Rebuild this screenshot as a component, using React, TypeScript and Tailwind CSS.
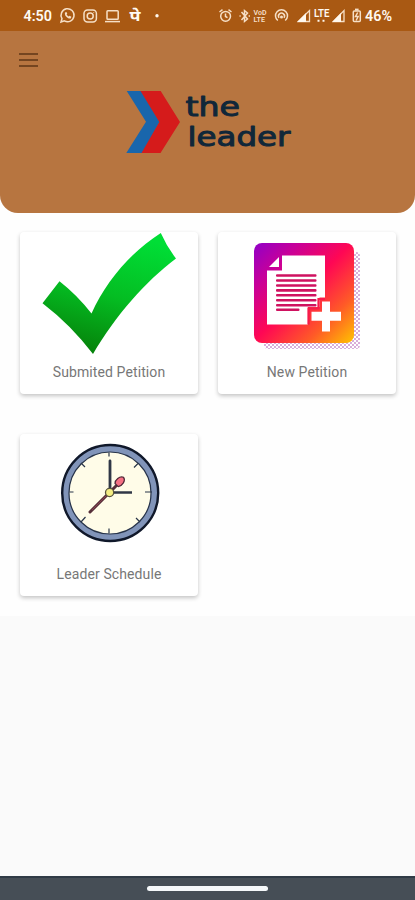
import React from "react";

function StatusBar() {
  return (
    <div className="h-[31px] shrink-0 bg-[#a95913] text-[#fff8ee]">
      <svg width="415" height="31" viewBox="0 0 415 31" fill="none" stroke="#f6dfc6" strokeWidth="1.5" className="block">
        <g fill="#fffaf2" stroke="none" fontFamily="Roboto, sans-serif" fontWeight="600">
          <text x="23.5" y="21" fontSize="14" textLength="28.5" lengthAdjust="spacingAndGlyphs">4:50</text>
          <text x="129.5" y="21" fontSize="15" fontWeight="700" fontFamily="'Noto Sans Devanagari', 'Noto Sans', FreeSans, sans-serif" textLength="11" lengthAdjust="spacingAndGlyphs">पे</text>
          <text x="253.5" y="14.5" fontSize="7" textLength="13" lengthAdjust="spacingAndGlyphs" fill="#f6dfc6">VoD</text>
          <text x="253.5" y="21.8" fontSize="7.5" textLength="11.5" lengthAdjust="spacingAndGlyphs" fill="#f6dfc6">LTE</text>
          <text x="314" y="16.5" fontSize="10" textLength="15.5" lengthAdjust="spacingAndGlyphs">LTE</text>
          <text x="365" y="21" fontSize="14" textLength="27" lengthAdjust="spacingAndGlyphs">46%</text>
        </g>
        <path d="M61 22l1-3.4a6.5 6.5 0 1 1 2.4 2.3z" />
        <path d="M65 12.5c-.8 3 2.4 6.5 5.7 6l.7-1.7-1.8-1-1 .8c-1-.5-1.6-1.2-2-2l.7-1-.9-1.7z" fill="#f6dfc6" stroke="none" />
        <rect x="84" y="10" width="12.4" height="12" rx="3.5" />
        <circle cx="90.2" cy="16" r="3" />
        <circle cx="93.8" cy="12.6" r=".5" fill="#f6dfc6" stroke="none" />
        <rect x="107" y="10.7" width="11.2" height="8.5" rx=".8" />
        <path d="M105 21.6h15" />
        <circle cx="157" cy="15.8" r="1.7" fill="#fff8ee" stroke="none" />
        <circle cx="225.6" cy="16.3" r="4.9" />
        <path d="M225.5 13.5v3l2 1.2M219.5 12l3-2.3M231.5 12l-3-2.3" />
        <path d="M241.5 12l6 7-3 2.5v-11l3 2.5-6 7" />
        <path d="M239.5 16h1.2M248.6 16h1.4" />
        <path d="M277.8 20.5a6 6 0 1 1 7.4 0M279 17.8a3 3 0 1 1 5 0" />
        <circle cx="281.5" cy="17" r="1.5" fill="#f6dfc6" stroke="none" />
        <path d="M298.5 21.5l11-11v11z" strokeWidth="1.3" />
        <path d="M297 22l9-9V22z" fill="#fff8ee" stroke="none" />
        <path d="M317.5 20.7h2M322.5 20.7h2" stroke="#fff8ee" strokeWidth="2" />
        <path d="M333.5 21.5l10.5-11v11z" strokeWidth="1.3" />
        <path d="M332 22l9-9V22z" fill="#fff8ee" stroke="none" />
        <rect x="353.3" y="11" width="7" height="10.6" rx="1" />
        <path d="M355 9.6h3.6" strokeWidth="2" />
        <path d="M357.7 12.5l-2.2 4h2.6l-2 4" strokeWidth="1.5" />
      </svg>
    </div>
  );
}

function Header() {
  return (
    <header className="h-[181.5px] shrink-0 rounded-b-[18px] bg-[#b77540] pt-[22px]">
      <button aria-label="Menu" className="ml-[19px] flex w-[19px] flex-col gap-[4px]">
        <span className="h-[2px] w-full bg-[#744520]" />
        <span className="h-[2px] w-full bg-[#744520]" />
        <span className="h-[2px] w-full bg-[#744520]" />
      </button>
      <div className="ml-[126px] mt-[23px]">
        <svg width="168" height="66" viewBox="126 90 168 66" className="block">
          <path d="M126.7 91h15l18 30.7-17 31.3h-16.4L146 121.7z" fill="#1966ac" />
          <path d="M140.5 91h20.2l19.3 31-19.5 31h-19l17.8-31z" fill="#d51b1b" />
          <g fill="#102739" stroke="#102739" strokeWidth="1" strokeLinejoin="round" fontFamily="'DejaVu Sans', sans-serif">
            <text x="185.5" y="115.5" fontSize="26.5" textLength="54.5" lengthAdjust="spacingAndGlyphs">the</text>
            <text x="187.5" y="145.5" fontSize="27" textLength="103" lengthAdjust="spacingAndGlyphs">leader</text>
          </g>
        </svg>
      </div>
    </header>
  );
}

function CheckArt() {
  return (
    <svg width="178" height="128" viewBox="20 232 178 128" className="block">
      <defs>
        <linearGradient id="green" x1=".6" y1="0" x2=".3" y2="1">
          <stop offset="0" stopColor="#00de36" />
          <stop offset=".5" stopColor="#04bd22" />
          <stop offset="1" stopColor="#067f09" />
        </linearGradient>
      </defs>
      <path d="M42.5 303.2L59.5 281.3Q77 295 91.5 313.5C106 281 131 252 160.8 233Q167 247 176 258.5C145 282 116 315 93 354Q71 325 42.5 303.2z" fill="url(#green)" />
    </svg>
  );
}

function DocumentArt() {
  return (
    <svg width="178" height="128" viewBox="218 232 178 128" className="block">
      <defs>
        <linearGradient id="sunset" x1="0" y1="0" x2="1" y2="1">
          <stop offset="0" stopColor="#9000c8" />
          <stop offset=".22" stopColor="#c7009a" />
          <stop offset=".49" stopColor="#ff0754" />
          <stop offset=".76" stopColor="#ff5a27" />
          <stop offset="1" stopColor="#ffc400" />
        </linearGradient>
        <pattern id="dots" width="4" height="4" patternUnits="userSpaceOnUse">
          <circle cx="1" cy="1" r=".95" fill="#c88bcb" />
          <circle cx="3" cy="3" r=".95" fill="#c88bcb" />
        </pattern>
      </defs>
      <rect x="264" y="252" width="96" height="97" rx="4" fill="url(#dots)" />
      <rect x="254" y="243" width="100" height="100" rx="8" fill="url(#sunset)" />
      <path d="M282 255.5h43v42h-5.5v9.5h-11.5v17.5H267v-54h15z" fill="#fff" />
      <path d="M269 267l10-10v10z" fill="#fff" />
      <g fill="#cf1260">
        <rect x="276" y="274.2" width="40.5" height="2.6" rx="1" />
        <rect x="276" y="279.2" width="40.5" height="2.6" rx="1" />
        <rect x="276" y="284.2" width="40.5" height="2.6" rx="1" />
        <rect x="276" y="289.1" width="40.5" height="2.6" rx="1" />
        <rect x="276" y="294" width="40.5" height="2.6" rx="1" />
        <rect x="276" y="299" width="40.5" height="2.6" rx="1" />
        <rect x="276" y="304" width="40.5" height="2.6" rx="1" />
        <rect x="276" y="308.5" width="23.5" height="2.6" rx="1" />
      </g>
      <path d="M308.5 324.5v-16h10V299h6.5" fill="none" stroke="#f61a4b" strokeWidth="2.2" />
      <path d="M322 301.5h8v10.3h11v9h-11v10.7h-8v-10.7h-10.5v-9H322z" fill="#fff" />
    </svg>
  );
}

function ClockArt() {
  return (
    <svg width="178" height="128" viewBox="20 434 178 128" fill="none" className="block">
      <circle cx="110.2" cy="493" r="48" fill="#8194b9" stroke="#10182a" strokeWidth="2.4" />
      <circle cx="110" cy="493" r="41" fill="#fffce8" stroke="#28344a" strokeWidth="1.2" />
      <path d="M109 452.5v4M109 528.5v5M69.5 492h4M145 492h7M81 463l4 4M134 467.5l4-4M81 522l4.5-5M136 518l4 4" stroke="#293548" strokeWidth="1.2" />
      <path d="M110 492v-31" stroke="#303746" strokeWidth="2.8" strokeLinecap="round" />
      <path d="M109 492.5h23" stroke="#303746" strokeWidth="2.4" />
      <path d="M90 512l26-26" stroke="#57303a" strokeWidth="3" strokeLinecap="round" />
      <path d="M92 510l18-18" stroke="#8b4150" strokeWidth="1" />
      <path d="M115 483.5c0-4 4.5-7.5 8.5-6.3 2.5 3.5-1 8.5-5.3 9.4z" fill="#f57083" stroke="#4d2635" strokeWidth="1.2" />
      <circle cx="109.6" cy="492.5" r="4.1" fill="#f4ed83" stroke="#58533f" strokeWidth="1.3" />
    </svg>
  );
}

function Card({ title, art }: { title: string; art: React.ReactNode }) {
  return (
    <button className="flex h-[162px] w-full flex-col items-center overflow-hidden rounded-[4px] bg-white shadow-[0_2px_4px_rgba(0,0,0,0.23)]">
      {art}
      <span className="mt-[2px] text-[14px] leading-5 tracking-[0.1px] text-[#777]">{title}</span>
    </button>
  );
}

export default function App() {
  return (
    <div className="flex h-[900px] w-[415px] flex-col overflow-hidden bg-[#fafafa] font-['Roboto',sans-serif]">
      <div className="shrink-0 bg-[#fefefe]">
        <StatusBar />
        <Header />
        <main className="grid h-[403.5px] grid-cols-[178px_178px] content-start gap-x-[20px] gap-y-[40px] pl-[20px] pt-[19.5px]">
          <Card title="Submited Petition" art={<CheckArt />} />
          <Card title="New Petition" art={<DocumentArt />} />
          <Card title="Leader Schedule" art={<ClockArt />} />
        </main>
      </div>
      <div className="flex-1" />
      <footer className="flex h-[24px] shrink-0 justify-center border-t-2 border-[#303b46] bg-[#464e56] pt-[8px]">
        <div className="h-[5px] w-[121px] rounded-full bg-[#f5f8fa]" />
      </footer>
    </div>
  );
}
